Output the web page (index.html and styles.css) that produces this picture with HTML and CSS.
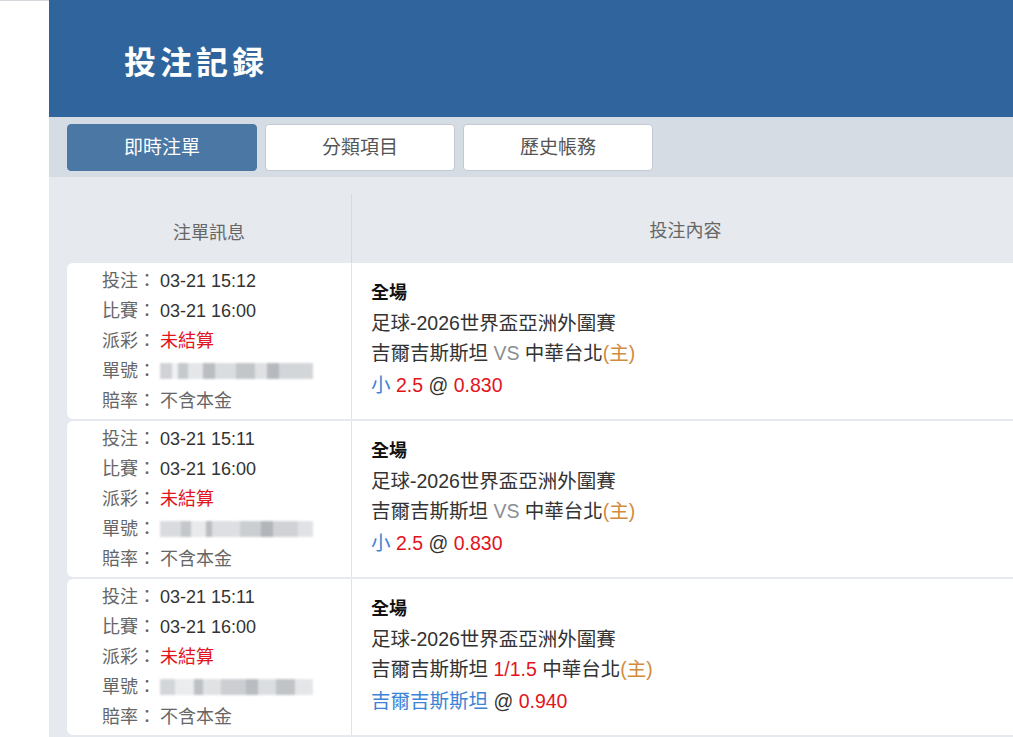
FILE: index.html
```html
<!DOCTYPE html>
<html lang="zh-Hant">
<head>
    <meta charset="UTF-8">
    <title>投注記録</title>
    <link rel="stylesheet" href="styles.css">
</head>
<body>

<div class="side"></div>

<div class="main">
    <div class="header">
        <h1>投注記録</h1>
    </div>

    <div class="tabs">
        <div class="tab active">即時注單</div>
        <div class="tab">分類項目</div>
        <div class="tab">歷史帳務</div>
    </div>

    <div class="table">
        <div class="thead">
            <div class="th th-info">注單訊息</div>
            <div class="th th-content">投注內容</div>
        </div>

        <div class="row">
            <div class="info">
                <div class="line"><span class="label">投注：</span><span class="val">03-21 15:12</span></div>
                <div class="line"><span class="label">比賽：</span><span class="val">03-21 16:00</span></div>
                <div class="line"><span class="label">派彩：</span><span class="red">未結算</span></div>
                <div class="line"><span class="label">單號：</span><span class="blur b1"></span></div>
                <div class="line"><span class="label">賠率：</span><span class="grey">不含本金</span></div>
            </div>
            <div class="content">
                <div class="line bold">全場</div>
                <div class="line">足球-2026世界盃亞洲外圍賽</div>
                <div class="line">吉爾吉斯斯坦 <span class="vs">VS</span> 中華台北<span class="home">(主)</span></div>
                <div class="line last"><span class="blue">小</span> <span class="red">2.5</span> @ <span class="red">0.830</span></div>
            </div>
        </div>

        <div class="row">
            <div class="info">
                <div class="line"><span class="label">投注：</span><span class="val">03-21 15:11</span></div>
                <div class="line"><span class="label">比賽：</span><span class="val">03-21 16:00</span></div>
                <div class="line"><span class="label">派彩：</span><span class="red">未結算</span></div>
                <div class="line"><span class="label">單號：</span><span class="blur b2"></span></div>
                <div class="line"><span class="label">賠率：</span><span class="grey">不含本金</span></div>
            </div>
            <div class="content">
                <div class="line bold">全場</div>
                <div class="line">足球-2026世界盃亞洲外圍賽</div>
                <div class="line">吉爾吉斯斯坦 <span class="vs">VS</span> 中華台北<span class="home">(主)</span></div>
                <div class="line last"><span class="blue">小</span> <span class="red">2.5</span> @ <span class="red">0.830</span></div>
            </div>
        </div>

        <div class="row">
            <div class="info">
                <div class="line"><span class="label">投注：</span><span class="val">03-21 15:11</span></div>
                <div class="line"><span class="label">比賽：</span><span class="val">03-21 16:00</span></div>
                <div class="line"><span class="label">派彩：</span><span class="red">未結算</span></div>
                <div class="line"><span class="label">單號：</span><span class="blur b3"></span></div>
                <div class="line"><span class="label">賠率：</span><span class="grey">不含本金</span></div>
            </div>
            <div class="content">
                <div class="line bold">全場</div>
                <div class="line">足球-2026世界盃亞洲外圍賽</div>
                <div class="line">吉爾吉斯斯坦 <span class="red">1/1.5</span> 中華台北<span class="home">(主)</span></div>
                <div class="line last"><span class="blue">吉爾吉斯斯坦</span> @ <span class="red">0.940</span></div>
            </div>
        </div>
    </div>
</div>

</body>
</html>
```

FILE: styles.css
```css
body {
    margin: 0;
    height: 737px;
    overflow: hidden;
    display: flex;
    background: #fff;
    font-family: "Liberation Sans", "Noto Sans CJK TC", sans-serif;
    color: #333;
}

.side {
    width: 49px;
    flex-shrink: 0;
    border-top: 1px solid #d3d6da;
    box-sizing: border-box;
}

.main {
    flex: 1;
    display: flex;
    flex-direction: column;
    background: #e6e9ee;
}

/* шапка */
.header {
    height: 117px;
    background: #2f659c;
    display: flex;
    align-items: center;
    padding-left: 75px;
}

.header h1 {
    margin: 0;
    margin-top: 2px;
    color: #fff;
    font-family: "Noto Sans CJK TC", sans-serif;
    font-size: 32px;
    font-weight: bold;
    letter-spacing: 4px;
}

.tabs {
    height: 60px;
    background: #d5dce4;
    display: flex;
    align-items: center;
    gap: 8px;
    padding-left: 18px;
}

.tab {
    width: 190px;
    height: 47px;
    box-sizing: border-box;
    display: flex;
    align-items: center;
    justify-content: center;
    padding-bottom: 3px;
    background: #fff;
    border: 1px solid #c3cad3;
    border-radius: 4px;
    color: #555;
    font-size: 19px;
}

.tab.active {
    background: #4a77a3;
    border-color: #4a77a3;
    color: #fff;
}

/* таблица */
.table {
    flex: 1;
    display: flex;
    flex-direction: column;
    padding-left: 18px;
}

.thead {
    height: 86px;
    display: flex;
}

.th {
    display: flex;
    align-items: center;
    justify-content: center;
    color: #666;
    font-size: 18px;
}

.th-info {
    width: 285px;
    box-sizing: border-box;
    border-right: 1px solid #d6dae0;
    margin-top: 17px;
    padding-top: 5px;
}

.th-content {
    flex: 1;
    padding-left: 6px;
    padding-top: 17px;
}

.row {
    display: flex;
    height: 156px;
    margin-bottom: 2px;
    background: #fff;
    border-radius: 6px 0 0 6px;
    flex-shrink: 0;
}

.info {
    width: 285px;
    box-sizing: border-box;
    padding: 3px 0 0 35px;
    border-right: 1px solid #e0e3e7;
    font-size: 18px;
}

.line {
    height: 30px;
    line-height: 30px;
    white-space: nowrap;
}

.label {
    display: inline-block;
    width: 58px;
    color: #666;
}

.val {
    color: #333;
}

.grey {
    color: #666;
}

.red {
    color: #e2141c;
}

.blur {
    display: inline-block;
    width: 153px;
    height: 16px;
    vertical-align: -2px;
    filter: blur(1.2px);
    opacity: 0.8;
}

.b1 {
    background: linear-gradient(90deg, #c5c8cc 0 8%, #eceef0 8% 12%, #b9bcc0 12% 18%, #dfe1e3 18% 28%, #a9adb2 28% 36%, #d2d5d8 36% 50%, #b4b8bc 50% 62%, #d8dadd 62% 70%, #a4a8ad 70% 78%, #c9ccd0 78% 100%);
}

.b2 {
    background: linear-gradient(90deg, #d0d3d6 0 14%, #b5b9bd 14% 20%, #e3e5e7 20% 30%, #a9adb2 30% 34%, #d5d8db 34% 52%, #bfc2c6 52% 66%, #9fa3a8 66% 74%, #c5c8cc 74% 90%, #dadcdf 90% 100%);
}

.b3 {
    background: linear-gradient(90deg, #c9ccd0 0 10%, #e6e8ea 10% 22%, #aeb2b6 22% 28%, #d9dbde 28% 40%, #c0c3c7 40% 56%, #a8acb1 56% 64%, #d3d6d9 64% 76%, #b2b6ba 76% 88%, #dfe1e3 88% 100%);
}

.content {
    flex: 1;
    padding: 15px 0 0 19px;
    font-size: 19.5px;
    color: #333;
}

.content .last {
    margin-top: 2px;
}

.bold {
    font-weight: bold;
    font-size: 18px;
    color: #111;
}

.vs {
    color: #8a8f96;
}

.home {
    color: #d28b3c;
}

.blue {
    color: #3d84d6;
}
```
